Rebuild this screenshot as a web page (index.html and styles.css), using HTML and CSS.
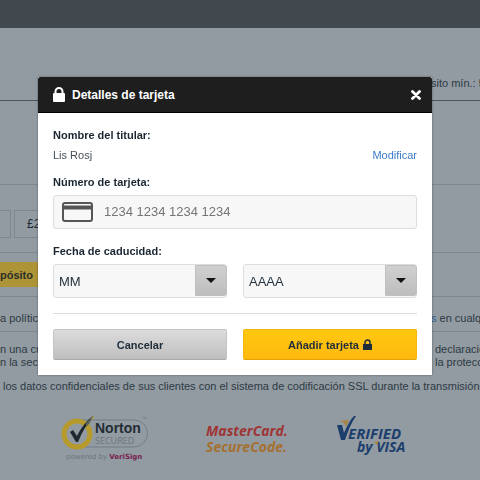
FILE: index.html
```html
<!DOCTYPE html>
<html lang="es">
<head>
    <meta charset="UTF-8">
    <meta name="viewport" content="width=device-width, initial-scale=1.0">
    <title>Detalles de tarjeta</title>
    <link rel="stylesheet" href="styles.css">
</head>
<body>
    <div class="page">
        <div class="topbar"></div>
        <div class="row limits">
            <span class="side">sito mín.: <b>5</b></span>
        </div>
        <div class="row spacer"></div>
        <div class="row amounts">
            <button class="amount first" type="button"></button>
            <button class="amount" type="button">£20</button>
        </div>
        <div class="row deposit">
            <button class="btn-deposit" type="button">pósito</button>
        </div>
        <div class="row policy">
            <span>a política</span>
            <span class="side"><a href="#">s</a> en cualquier</span>
        </div>
        <div class="legal">
            <div class="legal-line">
                <span>n una cuenta</span>
                <span class="side indent">declaración</span>
            </div>
            <div class="legal-line">
                <span>n la sección</span>
                <span class="side indent">la protección</span>
            </div>
            <p class="ssl">los datos confidenciales de sus clientes con el sistema de codificación SSL durante la transmisión.</p>
        </div>
        <div class="logos">
            <svg class="logo" width="90" height="50" viewBox="0 0 90 50" role="img" aria-label="Norton Secured">
                <path d="M20 5H74a13.500 13.500 0 0 1 0 27H20" fill="none" stroke="#737d84"/>
                <circle cx="17" cy="19" r="13" fill="#929ba2" stroke="#b79a2c" stroke-width="5"/>
                <path d="M10 17L13 15L17 21C21 13 26 6 33 1C27 9 22 17 18 27H16Z" fill="#20292f"/>
                <path d="M26 8L34 0L29 9L26 12Z" fill="#5c6355"/>
                <path d="M31 4L34 0L33 4Z" fill="#b79a2c"/>
                <text x="35" y="18" class="norton">Norton</text>
                <text x="35" y="29" class="secured">SECURED</text>
                <text x="82" y="5" class="tm">™</text>
                <text x="6" y="44" class="powered">powered by <tspan class="verisign">VeriSign</tspan></text>
            </svg>
            <svg class="logo" width="90" height="50" viewBox="0 0 90 50" role="img" aria-label="MasterCard SecureCode">
                <text x="2" y="21" class="mc red">MasterCard.</text>
                <text x="2" y="37" class="mc orange">SecureCode.</text>
            </svg>
            <svg class="logo" width="80" height="50" viewBox="0 0 80 50" role="img" aria-label="Verified by Visa">
                <path d="M4 6L13 5L10 12L8 8Z" fill="#a98245"/>
                <path d="M1 10H6L8 18C11 11 14 5 18 1H20C15 8 12 16 9 25H5Z" fill="#1c3e6d"/>
                <text x="12" y="24" class="visa">ERIFIED</text>
                <text x="21" y="37" class="visa by">by VISA</text>
                <path d="M38 27L43 26L41 30Z" fill="#a98245"/>
            </svg>
        </div>
    </div>

    <div class="overlay">
        <form class="modal" role="dialog" aria-labelledby="modalTitle">
            <div class="modal-header">
                <svg class="lock" width="12" height="16" viewBox="0 0 12 16">
                    <path d="M2.500 7V4.500a3.500 3.500 0 0 1 7 0V7" fill="none" stroke="#fff" stroke-width="2"/>
                    <rect y="6" width="12" height="9" rx="1" fill="#fff"/>
                </svg>
                <h1 id="modalTitle">Detalles de tarjeta</h1>
                <button class="close" type="button" aria-label="Cerrar">
                    <svg width="10" height="10" viewBox="0 0 10 10">
                        <path d="M1.500 1.500L8.500 8.500M8.500 1.500L1.500 8.500" stroke="#fff" stroke-width="2.800" stroke-linecap="round"/>
                    </svg>
                </button>
            </div>
            <div class="modal-body">
                <h2 class="label">Nombre del titular:</h2>
                <div class="holder">
                    <span>Lis Rosj</span>
                    <a href="#">Modificar</a>
                </div>

                <label class="label" for="cardNumber">Número de tarjeta:</label>
                <div class="card-field">
                    <svg width="31" height="20" viewBox="0 0 31 20">
                        <rect x="1" y="1" width="29" height="18" rx="2" fill="#f7f7f7" stroke="#555" stroke-width="2"/>
                        <path d="M1 5.500H30" stroke="#555" stroke-width="4"/>
                    </svg>
                    <input type="text" id="cardNumber" placeholder="1234 1234 1234 1234">
                </div>

                <label class="label" for="month">Fecha de caducidad:</label>
                <div class="two-cols">
                    <div class="select">
                        <select id="month">
                            <option>MM</option>
                        </select>
                        <span class="arrow"></span>
                    </div>
                    <div class="select">
                        <select id="year" aria-label="Año de caducidad">
                            <option>AAAA</option>
                        </select>
                        <span class="arrow"></span>
                    </div>
                </div>

                <div class="two-cols actions">
                    <button class="btn" type="button">Cancelar</button>
                    <button class="btn btn-add" type="submit">
                        Añadir tarjeta
                        <svg width="9" height="12" viewBox="0 0 9 12">
                            <path d="M2 6V3.500a2.500 2.500 0 0 1 5 0V6" fill="none" stroke="#1f2d3a" stroke-width="1.500"/>
                            <rect y="5" width="9" height="6" fill="#1f2d3a"/>
                        </svg>
                    </button>
                </div>
            </div>
        </form>
    </div>
</body>
</html>
```

FILE: styles.css
```css
* {
    box-sizing: border-box;
}
body {
    margin: 0;
    font-family: "Liberation Sans", Arial, sans-serif;
    font-size: 11px;
    color: #2d3a43;
    background-color: #929ba2;
}
button, input, select {
    font-family: inherit;
    margin: 0;
}

/* Page behind the modal */
.page {
    overflow: hidden;
    min-height: 100vh;
}
.topbar {
    height: 28px;
    background-color: #41494f;
}
.row {
    display: flex;
    align-items: center;
    justify-content: space-between;
    border-bottom: 1px solid #7d878e;
    white-space: nowrap;
}
.side {
    width: 49px;
    margin-left: auto;
    overflow: hidden;
}
.limits {
    height: 73px;
    padding-top: 38px;
    border-color: #4b555c;
}
.spacer {
    height: 84px;
}
.amounts {
    height: 68px;
    justify-content: flex-start;
    gap: 3px;
    padding-top: 10px;
}
.amount {
    width: 60px;
    height: 28px;
    padding: 0 12px;
    border: 1px solid #7d878e;
    background: none;
    font-size: 12px;
    text-align: left;
    color: #1d2a33;
}
.amount.first {
    width: 11px;
    padding: 0;
    border-left: none;
}
.deposit {
    height: 44px;
}
.btn-deposit {
    width: 60px;
    height: 25px;
    padding: 0;
    border: none;
    background-color: #ad9437;
    font-size: 11px;
    font-weight: bold;
    text-align: left;
    color: #2b2e28;
}
.policy {
    height: 35px;
    padding-top: 8px;
}
.policy a {
    color: #2f5a8c;
    text-decoration: none;
}
.legal {
    padding-top: 11px;
    line-height: 13px;
    white-space: nowrap;
}
.legal-line {
    display: flex;
}
.indent {
    padding-left: 4px;
}
.ssl {
    margin: 11px 0 0 3px;
}
.logos {
    display: flex;
    gap: 54px;
    padding: 22px 60px 0;
}
.logo {
    flex: none;
}
.logo:last-child {
    margin-left: -12px;
}
.norton {
    font: bold 14px "Liberation Sans", Arial, sans-serif;
    fill: #242d34;
}
.secured {
    font: 9px "Open Sans", sans-serif;
    fill: #6b757c;
}
.tm {
    font-size: 5px;
    fill: #6b757c;
}
.powered {
    font: 7px "DejaVu Sans", sans-serif;
    fill: #6b757c;
}
.verisign {
    font-weight: bold;
    fill: #782151;
}
.mc {
    font: italic bold 14px "Open Sans", sans-serif;
}
.red {
    fill: #9f3535;
}
.orange {
    fill: #a5702f;
}
.visa {
    font: italic bold 15px "Open Sans", sans-serif;
    fill: #1c3e6d;
}
.visa.by {
    font-size: 14px;
}

/* Modal */
.overlay {
    position: fixed;
    inset: 0;
    padding: 77px 48px 0 38px;
}
.modal {
    background-color: #fff;
    box-shadow: 0 0 2px rgba(0, 0, 0, 0.4);
}
.modal-header {
    display: flex;
    align-items: center;
    height: 36px;
    padding: 0 11px 0 15px;
    background-color: #1e1e1e;
    border-bottom: 1px solid #000;
    border-radius: 2px 2px 0 0;
    color: #fff;
}
.modal-header h1 {
    margin: 0 auto 0 7px;
    font-size: 12px;
}
.close {
    display: flex;
    padding: 0;
    border: none;
    background: none;
    cursor: pointer;
}
.modal-body {
    padding: 15px;
}
.label {
    display: block;
    margin: 0;
    font-size: 11px;
    font-weight: bold;
    line-height: 14px;
    color: #1a2733;
}
.holder {
    display: flex;
    justify-content: space-between;
    margin: 6px 0 12px;
    line-height: 15px;
    color: #444f57;
}
.holder a {
    color: #3b7bc8;
    text-decoration: none;
}
.card-field {
    display: flex;
    align-items: center;
    gap: 11px;
    height: 34px;
    margin: 6px 0 15px;
    padding: 0 8px;
    border: 1px solid #ddd;
    border-radius: 3px;
    background-color: #f7f7f7;
}
.card-field input {
    flex: 1;
    min-width: 0;
    padding: 0 0 2px;
    border: none;
    outline: none;
    background: none;
    font-size: 13px;
}
.card-field input::placeholder {
    color: #757575;
}
.two-cols {
    display: grid;
    grid-template-columns: 1fr 1fr;
    gap: 16px;
    margin-top: 6px;
}
.select {
    position: relative;
}
.select select {
    display: block;
    width: 100%;
    height: 34px;
    padding: 0 36px 0 5px;
    border: 1px solid #ddd;
    border-radius: 3px;
    background-color: #f7f7f7;
    font-size: 13px;
    color: #26343f;
    appearance: none;
}
.arrow {
    position: absolute;
    top: 1px;
    right: 0;
    display: flex;
    align-items: center;
    justify-content: center;
    width: 32px;
    height: 31px;
    border: 1px solid #c0c0c0;
    border-radius: 0 3px 3px 0;
    background: linear-gradient(#d0d0d0, #bdbdbd);
    pointer-events: none;
}
.arrow::before {
    content: "";
    border: 5px solid transparent;
    border-top-color: #111;
    border-bottom: none;
}
.actions {
    margin-top: 15px;
    padding-top: 15px;
    border-top: 1px solid #ddd;
}
.btn {
    display: flex;
    align-items: center;
    justify-content: center;
    gap: 4px;
    height: 31px;
    border: 1px solid #c4c4c4;
    border-bottom-color: #aaa;
    border-radius: 2px;
    background: linear-gradient(#dcdcdc, #bfbfbf);
    font-size: 11px;
    font-weight: bold;
    color: #1f2d3a;
    cursor: pointer;
}
.btn-add {
    border-color: #f5b60c;
    border-bottom-color: #e0a308;
    background: linear-gradient(#ffc810, #ffb90f);
}
```
